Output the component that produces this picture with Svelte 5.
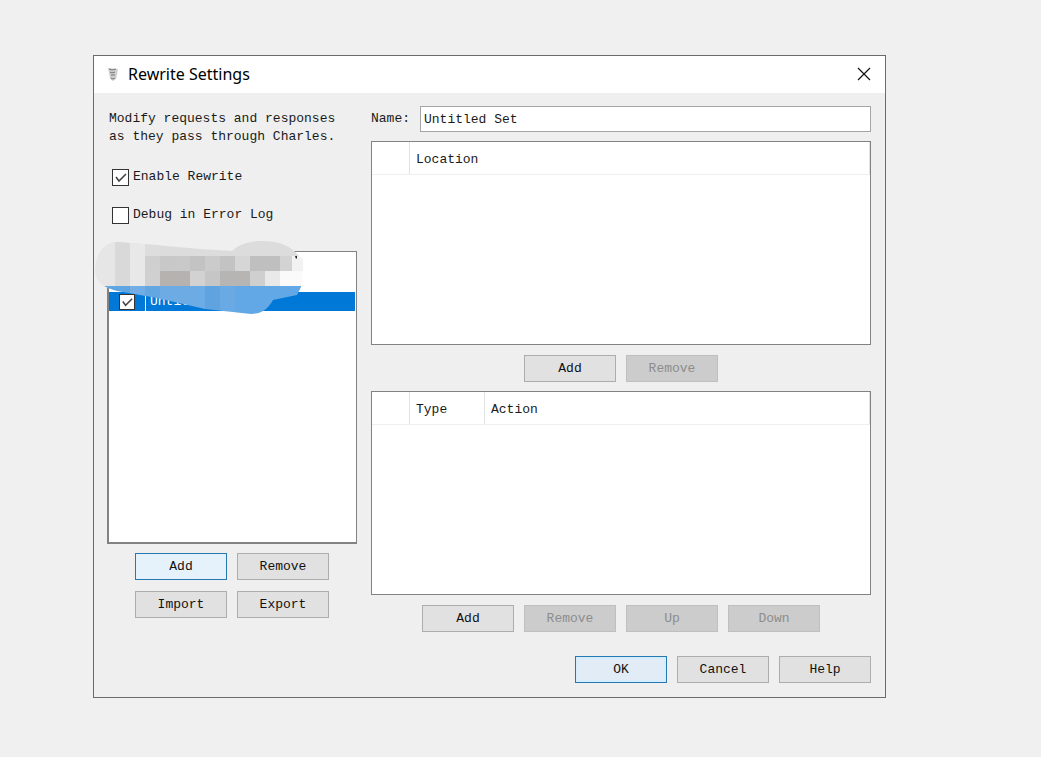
<script lang="ts">
  let enabled = $state(true);
  let debug = $state(false);
  let setActive = $state(true);
  let name = $state("Untitled Set");

  const listActions = ["Add", "Remove", "Import", "Export"];
  const ruleActions = ["Add", "Remove", "Up", "Down"];

  // x, y, width, height, fill, relative to the smudge box
  const tiles: [number, number, number, number, string][] = [
    [0, 0, 210, 15, "#dcdcdc"],
    [0, 0, 20, 50, "#e6e6e6"],
    [20, 0, 15, 50, "#d9d9d9"],
    [35, 0, 15, 50, "#e8e8e8"],
    [50, 0, 15, 15, "#dddddd"],
    [50, 15, 15, 15, "#cfcfcf"],
    [65, 15, 15, 15, "#c8c8c8"],
    [80, 15, 15, 15, "#c9c9c9"],
    [95, 15, 15, 15, "#c3c3c3"],
    [110, 15, 15, 15, "#cbcbcb"],
    [125, 15, 15, 15, "#c3c3c3"],
    [140, 15, 15, 15, "#d6d6d6"],
    [155, 15, 30, 15, "#bfbfbf"],
    [185, 15, 12, 15, "#d3d3d3"],
    [197, 15, 13, 15, "#f2f2f2"],
    [50, 30, 15, 15, "#d0d0d0"],
    [65, 30, 30, 15, "#b5b2b0"],
    [95, 30, 15, 15, "#d2d2d2"],
    [110, 30, 15, 15, "#c6c6c6"],
    [125, 30, 30, 15, "#b7b5b3"],
    [155, 30, 15, 15, "#cfcfcf"],
    [170, 30, 15, 15, "#e9e9e9"],
    [185, 30, 25, 15, "#fafafa"],
    [0, 45, 35, 28, "#5fa5e1"],
    [35, 45, 15, 28, "#72aee5"],
    [50, 45, 15, 28, "#62a6e2"],
    [65, 45, 45, 28, "#6cabe4"],
    [110, 45, 15, 28, "#5fa4e0"],
    [125, 45, 15, 28, "#6aaae4"],
    [140, 45, 70, 28, "#62a8e6"],
  ];
</script>

<main class="dialog">
  <header class="titlebar">
    <svg class="app-icon" width="12" height="14" viewBox="0 0 12 14">
      <path d="M1 1l10 1-1 6-1 4-3 2-3-2-1-6z" fill="#d0d0d0" />
      <path d="M2 2l3 1 4-1M3 5l2 1 3-1M4 8h4M4 11l2 1 2-1" stroke="#777" fill="none" />
    </svg>
    <h1>Rewrite Settings</h1>
    <button class="close" aria-label="Close">
      <svg width="14" height="14" viewBox="0 0 14 14">
        <path d="M1 1l12 12M13 1L1 13" stroke="#111" stroke-width="1.2" />
      </svg>
    </button>
  </header>

  <div class="body">
    <div class="columns">
      <section class="left">
        <p>Modify requests and responses<br />as they pass through Charles.</p>
        <label class="option">
          <input type="checkbox" bind:checked={enabled} />
          Enable Rewrite
        </label>
        <label class="option">
          <input type="checkbox" bind:checked={debug} />
          Debug in Error Log
        </label>

        <div class="sets">
          <div class="set-row">
            <span class="set-check">
              <input type="checkbox" aria-label="Set active" bind:checked={setActive} />
            </span>
            <span class="set-name">{name}</span>
          </div>
          <svg class="smudge" width="210" height="74" viewBox="0 0 210 74">
            <clipPath id="smudge-shape">
              <path
                d="M0 28C1 14 8 2 22 1L60 4 105 8 137 10C146 2 156 0 168 0 184 0 196 5 204 15L208 18V30L206 46 202 54 178 59C174 66 168 73 156 73L110 68 62 57 28 51C10 48 0 42 0 28z"
              />
            </clipPath>
            <g clip-path="url(#smudge-shape)">
              {#each tiles as [x, y, w, h, fill]}
                <rect {x} {y} width={w} height={h} {fill} />
              {/each}
            </g>
            <path d="M200 15h2v2l-1 1z" fill="#222" />
          </svg>
        </div>

        <div class="set-actions">
          {#each listActions as action}
            <button class="btn" class:focused={action === "Add"}>{action}</button>
          {/each}
        </div>
      </section>

      <section class="right">
        <div class="name-row">
          <label for="set-name">Name:</label>
          <input id="set-name" type="text" bind:value={name} />
        </div>

        <div class="pane">
          <table>
            <thead>
              <tr><th class="tick"></th><th>Location</th></tr>
            </thead>
          </table>
        </div>
        <div class="actions">
          <button class="btn">Add</button>
          <button class="btn" disabled>Remove</button>
        </div>

        <div class="pane">
          <table>
            <thead>
              <tr><th class="tick"></th><th class="type">Type</th><th>Action</th></tr>
            </thead>
          </table>
        </div>
        <div class="actions">
          {#each ruleActions as action}
            <button class="btn" disabled={action !== "Add"}>{action}</button>
          {/each}
        </div>
      </section>
    </div>

    <footer>
      <button class="btn default">OK</button>
      <button class="btn">Cancel</button>
      <button class="btn">Help</button>
    </footer>
  </div>
</main>

<style>
  :global(body) {
    background: #f0f0f0;
  }

  .dialog {
    margin: 55px 155px 0 93px;
    border: 1px solid #6b6b6b;
    background: #efefef;
    color: #1a1a1a;
    font: 13px/18px "Liberation Mono", monospace;
  }

  .titlebar {
    display: flex;
    align-items: center;
    gap: 9px;
    height: 35px;
    padding: 0 14px 2px 13px;
    background: #fff;
  }

  h1 {
    flex: 1;
    margin: 0;
    font: 16px/20px "Noto Sans", sans-serif;
    color: #000;
  }

  .close {
    display: flex;
    padding: 0;
    border: 0;
    background: none;
  }

  .body {
    padding: 13px 14px 14px 13px;
  }

  .columns {
    display: flex;
    gap: 14px;
  }

  .left {
    display: flex;
    flex-direction: column;
    flex: 1;
  }

  .right {
    flex: 2;
  }

  p {
    margin: 4px 2px 22px;
    white-space: nowrap;
  }

  .option {
    display: flex;
    align-items: center;
    gap: 4px;
    height: 18px;
    margin: 0 5px 20px;
  }

  input[type="checkbox"] {
    appearance: none;
    width: 17px;
    height: 17px;
    margin: 0;
    border: 1px solid #333;
    background: #fff;
  }

  input[type="checkbox"]:checked {
    background: #fff
      url('data:image/svg+xml,<svg xmlns="http://www.w3.org/2000/svg" viewBox="0 0 15 15"><path d="M3 7l3 4 7-7" fill="none" stroke="%23444" stroke-width="1.6"/></svg>');
  }

  .sets {
    position: relative;
    height: 250px;
    margin-top: 7px;
    padding: 40px 1px 0 0;
    border: 1px solid #828282;
    border-width: 1px 1px 2px 2px;
    background: #fff;
  }

  .set-row {
    display: flex;
    height: 19px;
    background: #0078d7;
    color: #fff;
    line-height: 20px;
  }

  .set-check {
    display: flex;
    align-items: center;
    width: 37px;
    padding-left: 10px;
    box-sizing: border-box;
    border-right: 1px solid #fff;
  }

  .set-check input[type="checkbox"] {
    width: 16px;
    height: 16px;
  }

  .set-name {
    padding-left: 4px;
  }

  .smudge {
    position: absolute;
    top: -11px;
    left: -14px;
  }

  .set-actions {
    display: grid;
    grid-template-columns: 92px 92px;
    justify-content: center;
    gap: 11px 10px;
    margin-top: 9px;
  }

  .btn {
    width: 92px;
    height: 27px;
    padding: 0;
    border: 1px solid #adadad;
    background: #e1e1e1;
    color: #111;
    font: inherit;
  }

  .btn:disabled {
    border-color: #bfbfbf;
    background: #ccc;
    color: #8c8c8c;
  }

  .btn.focused {
    border-color: #2678b0;
    background: #e5f1fb;
  }

  .btn.default {
    border-color: #2678b0;
    background: #e1ecf7;
    box-shadow: inset 0 0 0 2px #d5edfd;
  }

  .name-row {
    display: flex;
    align-items: center;
    gap: 10px;
    margin-bottom: 9px;
  }

  .name-row input {
    flex: 1;
    min-width: 0;
    height: 26px;
    padding: 0 3px;
    box-sizing: border-box;
    border: 1px solid #a5a5a5;
    background: #fff;
    color: inherit;
    font: inherit;
  }

  .pane {
    height: 202px;
    border: 1px solid #828282;
    background: #fff;
  }

  table {
    width: 100%;
    table-layout: fixed;
    border-collapse: collapse;
  }

  th {
    height: 29px;
    padding: 3px 6px 0;
    border-right: 1px solid #e2e2e2;
    border-bottom: 1px solid #efefef;
    font-weight: normal;
    text-align: left;
  }

  .tick {
    width: 25px;
  }

  .type {
    width: 62px;
  }

  .actions {
    display: flex;
    justify-content: center;
    gap: 10px;
    margin: 10px 0 9px;
  }

  footer {
    display: flex;
    justify-content: flex-end;
    gap: 10px;
    margin-top: 15px;
  }
</style>
